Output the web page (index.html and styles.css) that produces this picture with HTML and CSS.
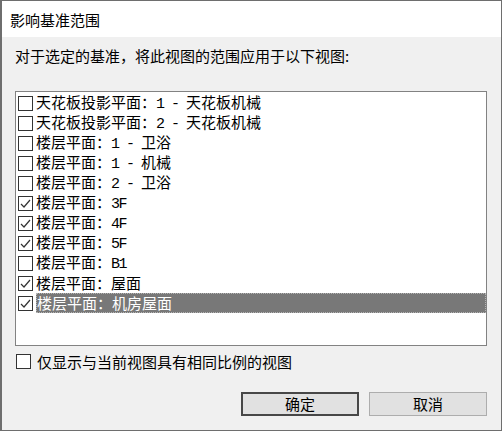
FILE: index.html
```html
<!DOCTYPE html>
<html lang="zh-CN">
<head>
  <meta charset="UTF-8">
  <title>影响基准范围</title>
  <link rel="stylesheet" href="styles.css">
</head>
<body>

<div class="dialog">
  <div class="titlebar">影响基准范围</div>

  <div class="content">
    <p class="hint">对于选定的基准，将此视图的范围应用于以下视图:</p>

    <div class="listbox">
      <div class="item"><span class="cb"></span><span class="lbl">天花板投影平面：<span class="lat">1 - </span>天花板机械</span></div>
      <div class="item"><span class="cb"></span><span class="lbl">天花板投影平面：<span class="lat">2 - </span>天花板机械</span></div>
      <div class="item"><span class="cb"></span><span class="lbl">楼层平面：<span class="lat">1 - </span>卫浴</span></div>
      <div class="item"><span class="cb"></span><span class="lbl">楼层平面：<span class="lat">1 - </span>机械</span></div>
      <div class="item"><span class="cb"></span><span class="lbl">楼层平面：<span class="lat">2 - </span>卫浴</span></div>
      <div class="item"><span class="cb on"><svg viewBox="0 0 13 13"><polyline points="2,7 5,10 11,3"/></svg></span><span class="lbl">楼层平面：<span class="lat">3F</span></span></div>
      <div class="item"><span class="cb on"><svg viewBox="0 0 13 13"><polyline points="2,7 5,10 11,3"/></svg></span><span class="lbl">楼层平面：<span class="lat">4F</span></span></div>
      <div class="item"><span class="cb on"><svg viewBox="0 0 13 13"><polyline points="2,7 5,10 11,3"/></svg></span><span class="lbl">楼层平面：<span class="lat">5F</span></span></div>
      <div class="item"><span class="cb"></span><span class="lbl">楼层平面：<span class="lat">B1</span></span></div>
      <div class="item"><span class="cb on"><svg viewBox="0 0 13 13"><polyline points="2,7 5,10 11,3"/></svg></span><span class="lbl">楼层平面：屋面</span></div>
      <div class="item selected"><span class="cb on"><svg viewBox="0 0 13 13"><polyline points="2,7 5,10 11,3"/></svg></span><span class="lbl">楼层平面：机房屋面</span></div>
    </div>

    <label class="option"><span class="cb"></span>仅显示与当前视图具有相同比例的视图</label>

    <div class="buttons">
      <button class="btn default">确定</button>
      <button class="btn">取消</button>
    </div>
  </div>
</div>

</body>
</html>
```

FILE: styles.css
```css
body {
  margin: 0;
  background: #f0f0f0;
  font-family: "Noto Sans CJK SC", "Noto Sans", sans-serif;
  font-size: 15px;
  color: #000;
}
.dialog {
  width: 502px;
  height: 431px;
  box-sizing: border-box;
  border: 1px solid #6e6e6e;
  border-left-width: 2px;
  background: #f0f0f0;
  display: flex;
  flex-direction: column;
}
.titlebar {
  height: 36px;
  background: #fff;
  padding-left: 8px;
  line-height: 38px;
  flex-shrink: 0;
}
.content {
  padding: 9px 14px 0 13px;
}
.hint {
  margin: 0;
  line-height: 20px;
}
.listbox {
  margin-top: 25px;
  height: 255px;
  box-sizing: border-box;
  border: 1px solid #828282;
  background: #fff;
  padding-top: 1px;
}
.item {
  display: flex;
  align-items: center;
  height: 20px;
  line-height: 20px;
  white-space: nowrap;
}
.cb {
  width: 15px;
  height: 15px;
  box-sizing: border-box;
  border: 1px solid #333;
  background: #fff;
  flex-shrink: 0;
  margin: 0 3px 0 2px;
  display: flex;
}
.cb svg {
  width: 13px;
  height: 13px;
}
.cb polyline {
  fill: none;
  stroke: #333;
  stroke-width: 1.2;
}
.lat {
  font-family: "Liberation Mono", monospace;
  letter-spacing: -1.5px;
}
.selected .lbl {
  flex: 1;
  height: 20px;
  box-sizing: border-box;
  background: #787878;
  color: #fff;
  border: 1px dotted #b4b4b4;
  line-height: 18px;
}
.option {
  display: flex;
  align-items: center;
  height: 20px;
  margin-top: 5px;
}
.option .cb {
  margin: 0 6px 0 1px;
}
.buttons {
  display: flex;
  justify-content: flex-end;
  gap: 10px;
  margin-top: 21px;
}
.btn {
  width: 118px;
  height: 24px;
  box-sizing: border-box;
  background: #e1e1e1;
  border: 1px solid #adadad;
  font-family: "Noto Sans CJK SC", sans-serif;
  font-size: 15px;
  color: #000;
  padding: 0;
  line-height: 20px;
}
.btn.default {
  border: 2px solid #474747;
}
```
